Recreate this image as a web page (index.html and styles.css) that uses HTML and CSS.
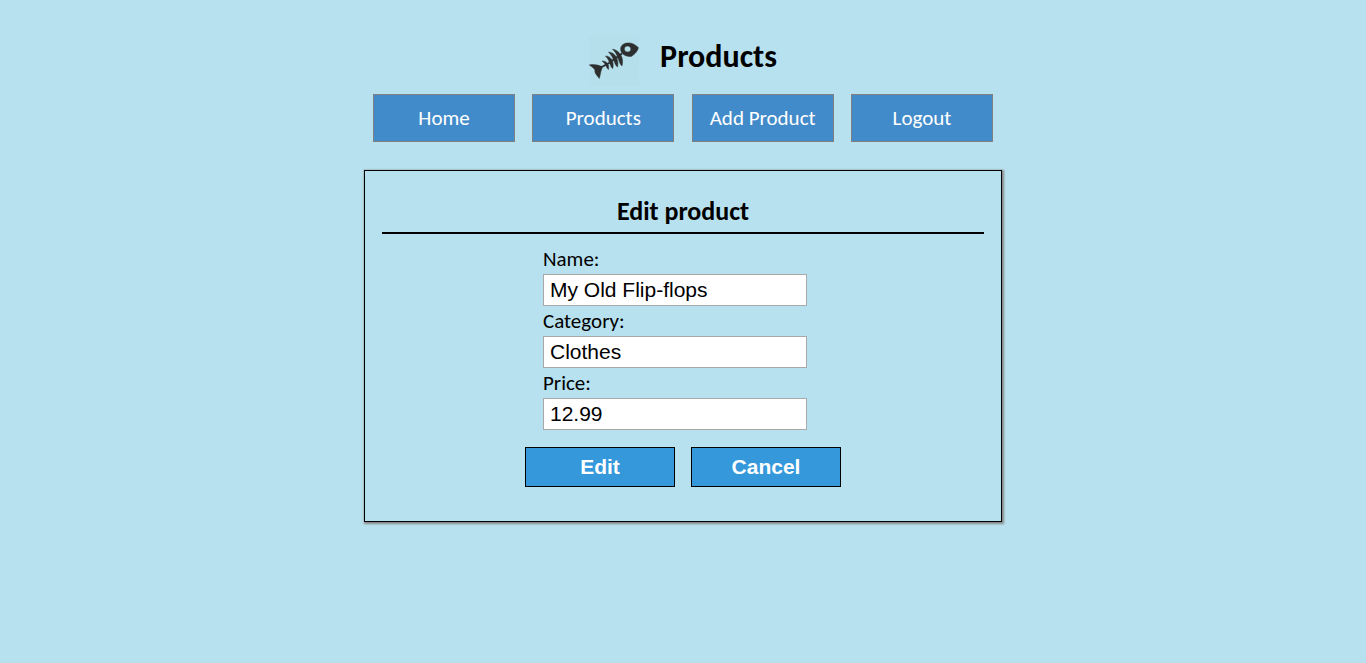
FILE: index.html
```html
<!DOCTYPE html>
<html lang="en">
<head>
<meta charset="utf-8">
<title>Products</title>
<link rel="stylesheet" href="styles.css">
</head>
<body>
<header class="header">
  <svg class="logo" viewBox="0 0 50 50" aria-hidden="true">
    <rect width="50" height="50" fill="#b5dfeb"/>
    <g fill="#2d2e2f" stroke="#2d2e2f" stroke-width="0.500" stroke-linejoin="round">
      <path fill-rule="evenodd" d="M32 15.500C30.500 10 34 7.500 38 7C43 6.500 46 8.500 49.300 11.500C49.300 14 46 18.500 42 20.500C38 20.500 34 19.500 32 15.500ZM35.400 13.500A3.200 3 0 1 0 41.800 12.500A3.200 3 0 1 0 35.400 13.500Z"/>
      <path d="M0.300 29C5 28 9 29 13 30.500L13 32.500C11.500 35 11.500 39 10.300 42.500C9 40.500 5 37 6 34.500C5 32 3 31 0.300 29Z"/>
      <path d="M13 25C17.500 25 20.500 28 19.500 33.500C17 32 17.500 28 13 25Z"/>
      <path d="M16.500 20C21.500 20 25.500 25 23.800 32.500C20.800 31 21.500 25 16.500 20Z"/>
      <path d="M19.500 16C25.500 16.500 30.500 22.500 28.500 31C25.300 29 25.500 22 19.500 16Z"/>
      <path d="M23.500 13.200C30 14 35.500 21 33 30C29.500 27.500 30 19 23.500 13.200Z"/>
    </g>
    <path d="M11 32L20 27L33 17.500" fill="none" stroke="#2d2e2f" stroke-width="2"/>
  </svg>
  <h1 class="title">Products</h1>
</header>
<nav class="nav">
  <a class="nav-link" href="#">Home</a>
  <a class="nav-link" href="#">Products</a>
  <a class="nav-link" href="#">Add Product</a>
  <a class="nav-link" href="#">Logout</a>
</nav>
<main class="panel">
  <h2 class="panel-title">Edit product</h2>
  <form class="form">
    <div class="fields">
      <label class="label" for="name">Name:</label>
      <input class="input" id="name" type="text" value="My Old Flip-flops">
      <label class="label" for="category">Category:</label>
      <input class="input" id="category" type="text" value="Clothes">
      <label class="label" for="price">Price:</label>
      <input class="input" id="price" type="text" value="12.99">
    </div>
    <div class="actions">
      <button class="button" type="submit">Edit</button>
      <button class="button" type="button">Cancel</button>
    </div>
  </form>
</main>
</body>
</html>
```
FILE: styles.css
```css
* {
  box-sizing: border-box;
}

body {
  margin: 0;
  padding: 36px 16px;
  background: #b7e1ee;
  color: #000;
  font-family: Carlito, Calibri, Lato, sans-serif;
  font-size: 21px;
  line-height: 30px;
}

.header {
  display: flex;
  justify-content: center;
  gap: 21px;
}

.logo {
  width: 50px;
  height: 50px;
}

.title {
  margin: 0;
  font-size: 32px;
  line-height: 42px;
}

.nav {
  display: flex;
  justify-content: space-between;
  max-width: 620px;
  margin: 8px auto 28px;
}

.nav-link {
  width: 142px;
  border: 1px solid #808080;
  background: #428bca;
  color: #fff;
  line-height: 46px;
  text-align: center;
  text-decoration: none;
}

.panel {
  max-width: 638px;
  margin: 0 auto;
  padding: 24px 17px 34px;
  border: 1px solid #000;
  box-shadow: 1px 1px 2px 1px #888;
}

.panel-title {
  margin: 0 0 10px;
  padding-bottom: 5px;
  border-bottom: 2px solid #000;
  font-size: 26px;
  line-height: 32px;
  text-align: center;
}

.form {
  display: flex;
  flex-direction: column;
  align-items: center;
  gap: 17px;
}

.fields {
  width: 280px;
}

.label {
  display: block;
}

.input {
  display: block;
  width: 264px;
  height: 32px;
  padding: 0 6px;
  border: 1px solid #a9a9a9;
  background: #fff;
  color: #000;
  font: 21px "Liberation Sans", Arial, sans-serif;
}

.actions {
  display: flex;
  gap: 16px;
}

.button {
  width: 150px;
  height: 40px;
  padding: 0;
  border: 1px solid #000;
  background: #3498db;
  color: #fff;
  font: bold 21px "Liberation Sans", Arial, sans-serif;
}
```
